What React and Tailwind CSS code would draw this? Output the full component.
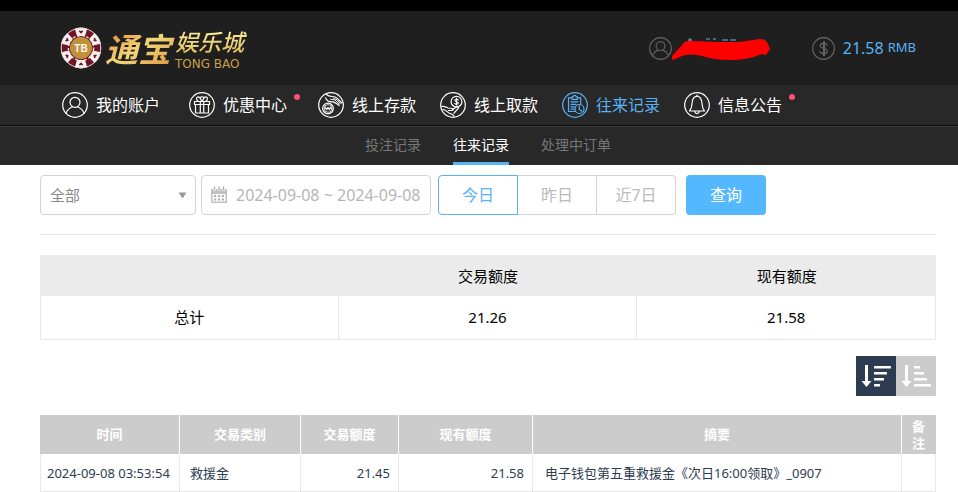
import React from "react";

function Ring({ className, children }) {
  return (
    <svg className={className} viewBox="0 0 26 26" fill="none" stroke="currentColor" strokeWidth="1.2" strokeLinecap="round" strokeLinejoin="round" aria-hidden="true">
      <circle cx="13" cy="13" r="12.3" />
      {children}
    </svg>
  );
}

const PersonPaths = () => (
  <>
    <circle cx="13" cy="10.3" r="5" />
    <path d="M4 21.2C5.4 17.6 8 15.8 10.6 14.8M22 21.2c-1.4-3.6-4-5.4-6.6-6.4" />
  </>
);

const GiftPaths = () => (
  <>
    <path d="M5.5 9.5h15v3h-15zM6.5 12.500v8.500h13v-8.500M11.300 9.500V21M14.700 9.500V21" />
    <path d="M12.500 9C11.500 6 10 4.800 8.500 5 6.800 5.500 7.500 8 9 9M13.500 9c1-3 2.500-4.200 4-4 1.700.5 1 3-.5 4M11 5.500c1-1 3-1 4 0" />
  </>
);

const DepositPaths = () => (
  <>
    <circle cx="10" cy="16.500" r="5.300" />
    <circle cx="10" cy="16.500" r="3.800" strokeWidth="0.8" />
    <path d="M7.500 15l1.200 3.200L10 15l1.300 3.200L12.500 15M6.800 16.400h6.400" strokeWidth="0.9" />
    <path d="M8.500 2.500c2.500 2.700 6 1.500 9 2.700 2.700 1.100 3.800 3.700 6.500 5.800M7.500 6c2 4 5 4.200 7.500 3.800 2 .3 4 2.200 6.200 3.700" />
    <path d="M12.500 7.200l4.500.8 4.200 4M15.500 6.400l3.500 1.300 3.300 4" strokeWidth="0.9" />
  </>
);

const WithdrawPaths = () => (
  <>
    <circle cx="16.500" cy="9.700" r="5.400" />
    <path d="M18.300 7.900c-.4-.8-3.300-1-3.400.5 0 1.600 3.400 1 3.400 2.700 0 1.500-3 1.400-3.600.4M16.500 6.300v6.800" strokeWidth="1.100" />
    <path d="M1.800 14.500c2.500-.8 4.200.2 6.200 1.500l4.300.5c1.700.5 1 2-.4 2H8.500M12.500 17.500l4.500-2.800c1.600-.5 2.300.7 1.300 1.700L14 21M3 17.500c4 .5 4.500 3.500 7.500 4.200 1.800.4 2.500 1.300 3.500 2.300" />
  </>
);

const RecordPaths = () => (
  <>
    <path d="M10 5.800H6.500v13.700h7M15.500 5.800h3.200v5.700M10 4.800h1.300c.2-1.800 2.700-1.800 2.900 0h1.300v2.500H10z" />
    <path d="M9 9.800h7M9 12.300h5M9 14.800h3.500M9 17.200h3" />
    <circle cx="17.500" cy="17" r="4.500" />
    <path d="M17.300 14v3.300l2.500 2" />
  </>
);

const BellPaths = () => (
  <>
    <path d="M13 4.200c-4.200.4-4.800 4-5 7.500-.2 3.400-.8 5.200-2.500 7.300h15c-1.700-2.100-2.300-3.900-2.500-7.300-.2-3.500-.8-7.100-5-7.500z" />
    <path d="M10.800 19.300c.3 3 4.100 3 4.400 0M13 4.200V3" />
  </>
);

const navItems = [
  { label: "我的账户", Icon: PersonPaths, extra: "mr-[5px]" },
  { label: "优惠中心", Icon: GiftPaths, dot: true, extra: "pr-[7px]" },
  { label: "线上存款", Icon: DepositPaths },
  { label: "线上取款", Icon: WithdrawPaths },
  { label: "往来记录", Icon: RecordPaths, active: true },
  { label: "信息公告", Icon: BellPaths, dot: true, extra: "pr-[7px]" },
];

const quarterTurns = [0, 60, 120, 180, 240, 300];

function Chip() {
  return (
    <svg className="size-[42px] shrink-0" viewBox="0 0 42 42" aria-hidden="true">
      <circle cx="21" cy="21" r="20.300" fill="#6f1626" />
      {quarterTurns.map((a) => (
        <g key={a} transform={`rotate(${a} 21 21)`}>
          <path d="M14.800 1.700Q21-.600 27.200 1.700L24.800 9.500Q21 8.300 17.200 9.500z" fill="#f8f1f1" />
          <path d="M21 6.800l-2-2.100c-.3-1.200 1.400-1.500 2-.5.600-1 2.300-.7 2 .5z" fill="#6d1a28" />
        </g>
      ))}
      <circle cx="21" cy="21" r="19.800" fill="none" stroke="#e8d8d8" strokeWidth="1" />
      <circle cx="21" cy="21" r="12.600" fill="none" stroke="#f1e5e0" strokeWidth="1.400" strokeDasharray="2.600 2" />
      <circle cx="21" cy="21" r="11" fill="#c0903c" />
      <text x="21" y="24.500" textAnchor="middle" fontFamily="Liberation Sans, sans-serif" fontSize="10" fontWeight="700" fill="#fff8e6">TB</text>
    </svg>
  );
}

function Logo() {
  return (
    <a href="#home" className="flex items-center gap-[3px]">
      <Chip />
      <span className="flex items-center">
        <span className="bg-linear-to-br from-[#d9792f] via-[#f3d878] to-[#d98a3a] bg-clip-text pr-1 pt-1 text-[33px] font-bold italic leading-[40px] text-transparent">通宝</span>
        <span className="flex flex-col">
          <span className="bg-linear-to-b from-[#fff6a8] to-[#e0b84a] bg-clip-text pr-1 text-[23px] font-medium italic leading-8 text-transparent">娱乐城</span>
          <span className="font-['DejaVu_Sans'] text-xs leading-3 text-[#c9a04a]">TONG BAO</span>
        </span>
      </span>
    </a>
  );
}

function SortIcon({ widths }) {
  return (
    <svg className="size-10" viewBox="0 0 40 40" fill="#fff" aria-hidden="true">
      <path d="M9 9h3v16h3.500l-5 6-5-6H9z" />
      {widths.map((w, i) => (
        <rect key={i} x="18" y={10 + i * 6} width={w} height="2.500" rx="0.500" />
      ))}
    </svg>
  );
}

const columns = [
  ["时间", "w-[140px]"],
  ["交易类别", "w-[121px]"],
  ["交易额度", "w-[98px]"],
  ["现有额度", "w-[134px]"],
  ["摘要", ""],
  ["备注", "w-[34px]"],
];

export default function App() {
  return (
    <div className="min-h-screen bg-white font-['Noto_Sans','Noto_Sans_CJK_SC',sans-serif] text-black">
      <header className="border-t-[11px] border-black bg-[#1f1f1f]">
        <div className="flex h-[74px] items-center justify-between pl-[60px] pr-[42px]">
          <Logo />
          <div className="flex items-center text-[#58b2f5]">
            <Ring className="size-[23px] text-[#666]"><PersonPaths /></Ring>
            <svg className="h-[26px] w-[100px]" viewBox="0 0 100 26" aria-hidden="true">
              <path d="M17 4h2v2h-2zM34 4h4M41 4h3M50 5h6M58 5h6M17 15h3" stroke="#65aee0" fill="none" />
              <path d="M0 21L10 10Q14 5 19 6L45 7L67 7L88 4Q94 4 96 9L98 14L94 20L90 19Q76 25 58 25Q42 25 30 21Q18 18 10 21L1 25Q-1 24 0 21Z" fill="#f00" />
            </svg>
            <Ring className="ml-10 mr-2 size-[23px] text-[#666]">
              <path d="M17 9.300c-.7-2.800-7.800-3-7.800.5 0 3.700 8 2.400 8 6.300 0 3.600-7.500 3.500-8.400.3M13 5v16M14.200 5v16" />
            </Ring>
            <span className="text-base">21.58</span>
            <span className="ml-1 text-[13px]">RMB</span>
          </div>
        </div>
      </header>

      <nav className="flex h-[41px] items-center gap-6 border-b border-[#111] bg-[#282828] pl-[62px] text-base text-white">
        {navItems.map(({ label, Icon, active, dot, extra }) => (
          <a key={label} href="#nav" className={`relative flex items-center gap-2 whitespace-nowrap ${active ? "text-[#58b2f5]" : ""} ${extra || ""}`}>
            <Ring className="size-[26px]"><Icon /></Ring>
            {label}
            {dot && <span className="absolute -right-[6px] top-0.5 size-1.5 rounded-full bg-[#ff5078]" />}
          </a>
        ))}
      </nav>

      <nav className="flex h-[39px] justify-center gap-8 border-t border-[#383838] bg-[#282828] pl-10 pr-[22px] text-sm text-[#777]">
        <a href="#bets" className="flex items-center border-b-3 border-transparent">投注记录</a>
        <a href="#records" className="flex items-center border-b-3 border-[#58b2f5] text-white">往来记录</a>
        <a href="#pending" className="flex items-center border-b-3 border-transparent">处理中订单</a>
      </nav>

      <main className="pl-10 pr-[22px] pt-2.5">
        <form className="flex items-center border-b border-[#e4e4e4] pb-[19px]" onSubmit={(e) => e.preventDefault()}>
          <div className="relative w-[156px]">
            <select aria-label="类别" className="h-10 w-full appearance-none rounded border border-[#d3d3d3] bg-white pl-[9px] text-[15px] text-[#888]">
              <option>全部</option>
            </select>
            <svg className="pointer-events-none absolute right-[9px] top-[17px] h-[7px] w-[9px]" viewBox="0 0 9 7" fill="#999" aria-hidden="true"><path d="M0.500 0.500h8L4.500 6.500z" /></svg>
          </div>
          <label className="ml-[5px] flex h-10 w-[230px] items-center gap-2 rounded border border-[#d3d3d3] pl-2 text-[#b5b5b5]">
            <svg className="size-[18px] shrink-0" viewBox="0 0 18 18" aria-hidden="true">
              <path d="M1 3h16v14H1z" fill="#c0c0c0" />
              <path d="M2.500 8h13v7.500h-13z" fill="#fff" />
              <path d="M4.500 1v4M9 1v4M13.500 1v4" stroke="#fff" strokeWidth="2.600" />
              <path d="M4.500 0.500V4.500M9 0.500V4.500M13.500 0.500V4.500" stroke="#b0b0b0" strokeWidth="1.400" />
              <path d="M4 10h10M4 13.400h10" stroke="#b0b0b0" strokeWidth="2" strokeDasharray="2.200 1.700" />
            </svg>
            <input aria-label="日期" className="w-full min-w-0 bg-transparent text-base outline-none" defaultValue="2024-09-08 ~ 2024-09-08" />
          </label>
          <div className="ml-[7px] flex text-base text-[#bbb]">
            <button type="button" className="h-10 w-20 rounded-l border border-[#58b2f5] text-[#58b2f5]">今日</button>
            <button type="button" className="h-10 w-[79px] border-y border-r border-[#d3d3d3]">昨日</button>
            <button type="button" className="h-10 w-[79px] rounded-r border-y border-r border-[#d3d3d3]">近7日</button>
          </div>
          <button type="submit" className="ml-2.5 h-10 w-20 rounded bg-[#54b8ff] text-base text-white">查询</button>
        </form>

        <table className="mt-5 w-full table-fixed border-separate border-spacing-0 text-center text-[15px]">
          <thead>
            <tr className="h-[41px] bg-[#ebebeb]">
              <th aria-label="项目" />
              <th className="pb-0 pt-0.5 font-normal">交易额度</th>
              <th className="pb-0 pt-0.5 font-normal">现有额度</th>
            </tr>
          </thead>
          <tbody>
            <tr className="h-[44px]">
              <td className="border-x border-b border-[#e6e6e6]">总计</td>
              <td className="border-b border-r border-[#e6e6e6]">21.26</td>
              <td className="border-b border-r border-[#e6e6e6]">21.58</td>
            </tr>
          </tbody>
        </table>

        <div className="mt-4 flex justify-end">
          <button type="button" aria-label="降序" className="bg-[#2d3c50]"><SortIcon widths={[17, 13, 10, 6]} /></button>
          <button type="button" aria-label="升序" className="bg-[#ccc]"><SortIcon widths={[6, 10, 13, 17]} /></button>
        </div>

        <table className="mt-[19px] w-full table-fixed border-separate border-spacing-0 text-[13px] text-[#2d3c50]">
          <thead>
            <tr className="h-[39px] bg-[#ccc] text-white">
              {columns.map(([name, width]) => (
                <th key={name} className={`border-r border-white px-2 py-0 font-bold leading-[17px] last:border-[#ccc] ${width}`}>{name}</th>
              ))}
            </tr>
          </thead>
          <tbody>
            <tr className="h-[38px] whitespace-nowrap *:pb-0 *:pt-0.5">
              <td className="border-x border-b border-[#e9e9e9] pl-1.5">2024-09-08 03:53:54</td>
              <td className="border-b border-r border-[#e9e9e9] pl-2.5">救援金</td>
              <td className="border-b border-r border-[#e9e9e9] pr-2 text-right">21.45</td>
              <td className="border-b border-r border-[#e9e9e9] pr-2 text-right">21.58</td>
              <td className="border-b border-r border-[#e9e9e9] pl-3">电子钱包第五重救援金《次日16:00领取》_0907</td>
              <td className="border-b border-r border-[#e9e9e9]" />
            </tr>
          </tbody>
        </table>
      </main>
    </div>
  );
}
